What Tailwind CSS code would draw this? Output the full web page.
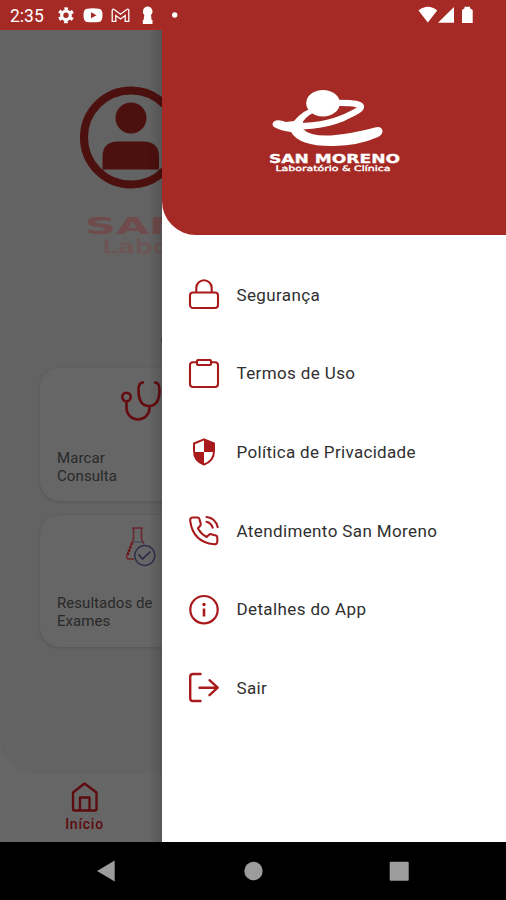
<!DOCTYPE html>
<html lang="pt-BR">
<head>
<meta charset="utf-8">
<meta name="viewport" content="width=device-width, initial-scale=1">
<title>San Moreno</title>
<script src="https://cdn.jsdelivr.net/npm/@tailwindcss/browser@4"></script>
</head>
<body class="w-[506px] h-[900px] overflow-hidden bg-black font-['Roboto',sans-serif]">
<div class="flex flex-col w-[506px] h-[900px]">
  <!-- status bar -->
  <header class="h-[30px] shrink-0 bg-[#a52a25] flex items-center text-white">
    <span class="ml-[10px] w-[48px] text-[17.500px] leading-[30px] pt-[2px] whitespace-nowrap">2:35</span>
    <svg class="w-[120px] h-[30px]" viewBox="58 0 120 30" fill="#fff">
      <g fill="none" stroke="#fff"><circle cx="66" cy="15.3" r="4.3" stroke-width="3.2"/><circle cx="66" cy="15.3" r="6.6" stroke-width="2.8" stroke-dasharray="3.45 3.45" stroke-dashoffset="1.7" transform="rotate(30 66 15.3)"/></g>
      <path fill-rule="evenodd" d="M87 8.7Q93 8 99 8.7Q102.500 9 102.500 15.300Q102.500 21.600 99 22Q93 22.700 87 22Q83.500 21.600 83.500 15.300Q83.500 9 87 8.700ZM91 12.300V18.300L96.500 15.300Z"/>
      <path d="M112.200 21.400V11Q112.200 8.300 114.500 9.700L120.500 14.300L126.500 9.700Q128.800 8.300 128.800 11V21.400H125.200V15.500L120.500 19L115.800 15.500V21.400Z" fill="none" stroke="#fff" stroke-width="1.300"/>
      <path d="M147.500 6.500A5 5 0 0 1 151 15L151.600 20H152.500V24H142.800V20H143.600L144.300 15A5 5 0 0 1 147.500 6.500Z"/>
      <circle cx="174.700" cy="15" r="2.700"/>
    </svg>
    <svg class="ml-auto w-[88px] h-[30px]" viewBox="418 0 88 30" fill="#fff">
      <path d="M418.500 10.500Q428 3 437.200 10.500L427.800 22.500Z"/><path d="M438 22.700L454 7V22.700Z"/><path d="M464.500 6.800H470V8.300L472.700 10V23H462V10L464.500 8.300Z"/>
    </svg>
  </header>

  <div class="flex h-[812px] shrink-0">
    <!-- dimmed home screen behind the drawer -->
    <main class="relative w-[162px] h-full shrink-0 overflow-hidden bg-[#666666] flex flex-col whitespace-nowrap">
      <div class="h-[742px] w-[220px] shrink-0 bg-[#636363] rounded-bl-[38px] shadow-[0_0_2px_#5559] pt-[56px]">
        <svg class="block ml-[79px] w-[104px] h-[104px]" viewBox="79 86 104 104">
          <circle cx="131" cy="137.500" r="47" fill="none" stroke="#4c100e" stroke-width="8"/>
          <circle cx="131" cy="118" r="15.500" fill="#4c100e"/>
          <path d="M102.500 169.500V157Q102.500 141.500 118 141.500H143.500Q159 141.500 159 157V169.500Z" fill="#4c100e"/>
        </svg>
        <svg class="block mt-[20px] ml-[80px] w-[140px] h-[50px]" viewBox="80 210 140 50" font-family="DejaVu Sans, sans-serif">
          <text x="85" y="234" font-size="23" font-weight="700" textLength="100" lengthAdjust="spacingAndGlyphs" fill="#704b4b">SAN</text>
          <text x="102.500" y="253" font-size="18.500" textLength="67" lengthAdjust="spacingAndGlyphs" fill="#6e5555" stroke="#6e5555" stroke-width="0.600">Labo</text>
        </svg>
        <div class="mt-[77px] ml-[160.500px] w-2 h-[6px] rounded-full bg-[#3d3d3d]"></div>
        <section class="mt-[25px] ml-[40px] w-[170px] h-[133px] rounded-[20px] bg-[#666666] shadow-[0_1px_3px_#555555] flex flex-col">
          <svg class="ml-[80px] mt-[11px] w-[44px] h-[44px]" viewBox="120 379 44 44" fill="none" stroke="#650b10" stroke-width="2.600" stroke-linecap="round">
            <circle cx="126.500" cy="397" r="4.200"/><path d="M126.500 401.500V408A11.500 11.500 0 0 0 149.500 408V406M143 382.500Q138.500 382.500 138.500 390Q138.500 406 149 406Q159.500 406 159.500 390Q159.500 382.500 155 382.500"/>
          </svg>
          <p class="ml-[17px] mt-[25.500px] text-[15px] leading-[18px] tracking-[0.1px] text-[#292929]">Marcar<br>Consulta</p>
        </section>
        <section class="mt-[14px] ml-[40px] w-[170px] h-[132px] rounded-[20px] bg-[#666666] shadow-[0_1px_3px_#555555] flex flex-col">
          <svg class="ml-[83px] mt-[9px] w-[36px] h-[44px]" viewBox="123 524 36 44" fill="none" stroke-linejoin="round">
            <path d="M132 528H143M133.500 528V539L127 555Q125.500 559 129.500 559H134M141.500 528V539L144 544" stroke="#69282f" stroke-width="1.600"/>
            <path d="M132 543L127.500 555.500" stroke="#70141b" stroke-width="2.500" stroke-dasharray="2 1.500"/><path d="M133 542H143" stroke="#3c3d50" stroke-width="1"/>
            <circle cx="144.800" cy="555.500" r="10" fill="#666666" stroke="#303249" stroke-width="1.500"/><path d="M138.500 554.500L142.500 559L150.500 551.500" stroke="#252840" stroke-width="1.700"/>
          </svg>
          <p class="ml-[17px] mt-[26px] text-[15px] leading-[18px] tracking-[0.050px] text-[#292929]">Resultados de<br>Exames</p>
        </section>
      </div>
      <nav class="w-[169px] flex-1 flex flex-col items-center text-[#5d0b0e] pt-[8px]">
        <svg class="w-[30px] h-[32px]" viewBox="70 780 30 32" fill="none" stroke="#5d0b0e" stroke-width="2.300" stroke-linejoin="round">
          <path d="M73 792.500L84.500 783.500L96.500 792.500V809Q96.500 810.500 95 810.500H74.500Q73 810.500 73 809Z"/><path d="M80 810V797.500H89.500V810"/>
        </svg>
        <span class="text-[14px] leading-[18px] font-medium tracking-[0.750px] mt-[3px]">Início</span>
      </nav>
      <div class="absolute inset-y-0 right-0 w-[14px] bg-linear-to-r from-transparent to-black/15"></div>
    </main>

    <aside class="w-[344px] h-full bg-white">
      <div class="h-[205px] bg-[#a52a25] rounded-bl-[34px]">
        <svg class="block ml-[98px] w-[150px] h-[180px]" viewBox="260 30 150 180" fill="none" font-family="DejaVu Sans, sans-serif">
          <ellipse cx="323" cy="103.200" rx="16.800" ry="13.200" fill="#fff"/>
          <path d="M277 124C300 129 326 125 343 118C366 108 369 103 340 102.800" stroke="#fff" stroke-width="6.300" stroke-linecap="round"/>
          <path d="M274 121.500Q278 119 286 122L294 121Q303 110 317 106L320 110Q308 114 303 121.500L303 129Q310 136.500 331 135.500Q353 133.500 375 127.500Q381 126 382.300 130Q383.500 134 378 137Q359 145.500 334 146Q299 146.500 291 132Q281 131 274 127Q271 124 274 121.500Z" fill="#fff"/>
          <text x="269" y="162.800" font-size="12.200" font-weight="700" fill="#fff" stroke="#fff" stroke-width="0.300" textLength="131" lengthAdjust="spacingAndGlyphs">SAN MORENO</text>
          <text x="275.500" y="171" font-size="7.500" fill="#fff" stroke="#fff" stroke-width="0.350" textLength="115" lengthAdjust="spacingAndGlyphs">Laboratório &amp; Clínica</text>
        </svg>
      </div>
      <ul class="pt-[20.500px] pl-[26px] text-[17px] tracking-[0.380px] text-[#303030] whitespace-nowrap">
        <li class="h-[78.700px] flex items-center gap-[16.500px]">
          <svg class="w-8 h-8" viewBox="0 0 32 32" fill="none" stroke="#a81a1b" stroke-width="2.100"><rect x="2" y="13.500" width="28" height="15.500" rx="3"/><path d="M8.300 13.500V9A7.700 7.700 0 0 1 23.700 9V13.500"/></svg>
          <span class="pt-[1.200px]">Segurança</span>
        </li>
        <li class="h-[78.700px] flex items-center gap-[16.500px]">
          <svg class="w-8 h-8" viewBox="0 0 32 32" fill="none" stroke="#a81a1b" stroke-width="2.100"><path d="M9 4.200H5Q2 4.200 2 7.200V26Q2 29 5 29H27Q30 29 30 26V7.200Q30 4.200 27 4.200H23"/><rect x="9" y="2" width="14" height="5" rx="1"/></svg>
          <span class="pt-[1.200px]">Termos de Uso</span>
        </li>
        <li class="h-[78.700px] flex items-center gap-[16.500px]">
          <svg class="w-8 h-8" viewBox="0 0 32 32"><path d="M16 3.300L26 7.500V15Q26 25 16 28.500Q6 25 6 15V7.500Z" fill="#fff" stroke="#a81a1b" stroke-width="2" stroke-linejoin="round"/><path d="M16 3.300L26 7.500V16H16ZM6 16H16V28.500Q7 25 6 16Z" fill="#a81a1b"/></svg>
          <span class="pt-[1.200px] tracking-[0.320px]">Política de Privacidade</span>
        </li>
        <li class="h-[78.700px] flex items-center gap-[16.500px]">
          <svg class="w-8 h-8" viewBox="0 0 32 32" fill="none" stroke="#a81a1b" stroke-width="2.100" stroke-linecap="round" stroke-linejoin="round"><path d="M4.500 2.500H9.500Q11 2.500 11.400 4L12.700 8.600Q13 10 12 11L9.900 13.200Q13 19 18.700 22L21 19.800Q22 18.900 23.300 19.300L27.800 20.600Q29.300 21 29.300 22.600V26.200Q29.300 29.500 26 29.200Q5 27 2.200 5.800Q1.900 2.700 4.500 2.500Z"/><path d="M18.500 6.800Q23 7.800 24.700 12.700M18.500 2Q27.500 3 29.700 12.200"/></svg>
          <span class="pt-[1.200px]">Atendimento San Moreno</span>
        </li>
        <li class="h-[78.700px] flex items-center gap-[16.500px]">
          <svg class="w-8 h-8" viewBox="0 0 32 32" fill="none" stroke="#a81a1b"><circle cx="16" cy="15.700" r="13.700" stroke-width="2.200"/><path d="M16 14.500V22.500" stroke-width="2.600"/><circle cx="16" cy="10.500" r="1.700" fill="#a81a1b" stroke="none"/></svg>
          <span class="pt-[1.200px]">Detalhes do App</span>
        </li>
        <li class="h-[78.700px] flex items-center gap-[16.500px]">
          <svg class="w-8 h-8" viewBox="0 0 32 32" fill="none" stroke="#a81a1b" stroke-width="2.400" stroke-linecap="round" stroke-linejoin="round"><path d="M12.500 2H5Q2.200 2 2.200 4.700V26.200Q2.200 29 5 29H12.500M11.500 15.700H29.500M21.500 8.200L29.700 15.700L21.500 23.200"/></svg>
          <span class="pt-[1.200px]">Sair</span>
        </li>
      </ul>
    </aside>
  </div>

  <!-- system navigation -->
  <footer class="flex-1 bg-black">
    <svg class="block w-[506px] h-[58px]" viewBox="0 842 506 58" fill="#9c9c9c"><path d="M97 871L114.700 860.500V881.500Z"/><circle cx="253.500" cy="871" r="9.200"/><rect x="389.700" y="861.700" width="19" height="19" rx="1"/></svg>
  </footer>
</div>
</body>
</html>
